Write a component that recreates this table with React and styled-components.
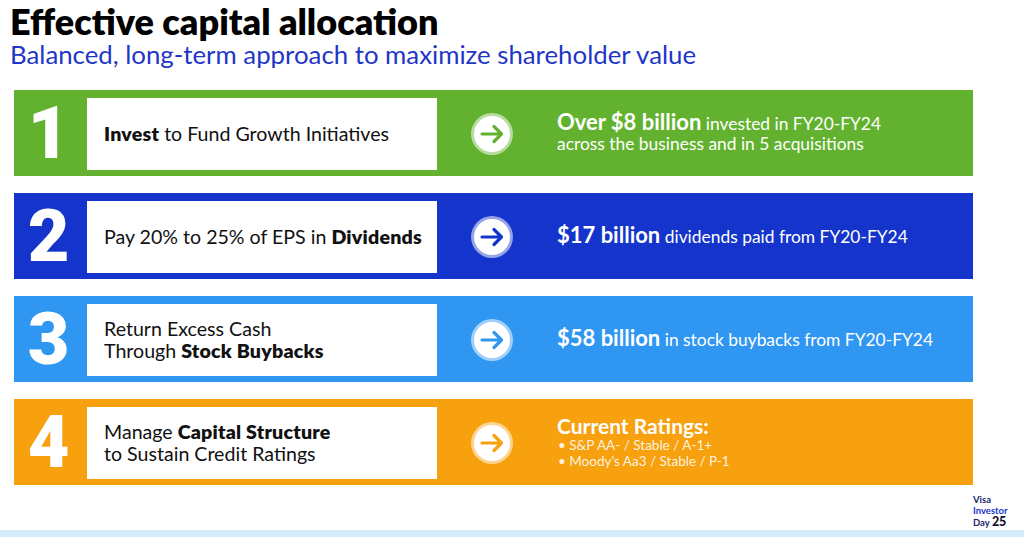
import React from 'react';
import styled, { createGlobalStyle } from 'styled-components';

const GlobalStyle = createGlobalStyle`
  html, body {
    margin: 0;
    padding: 0;
    background: #ffffff;
  }
  body {
    font-family: Lato, "Open Sans", "Liberation Sans", sans-serif;
  }
`;

const Page = styled.div`
  width: 1024px;
  height: 537px;
  display: flex;
  flex-direction: column;
  overflow: hidden;
  background: #ffffff;
`;

const Header = styled.header`
  padding: 0 0 0 10px;
  height: 90px;
`;

const Title = styled.h1`
  margin: 0;
  font-size: 36px;
  font-weight: 800;
  line-height: 42px;
  color: #000000;
`;

const Subtitle = styled.h2`
  margin: 0;
  font-size: 25.8px;
  font-weight: 400;
  line-height: 24px;
  color: #1f36c7;
`;

const Bars = styled.div`
  display: flex;
  flex-direction: column;
  gap: 17px;
  margin-left: 14px;
  width: 959px;
`;

const Bar = styled.div`
  height: 86px;
  box-sizing: border-box;
  padding: 8px 0 8px 0;
  background: ${(p) => p.$color};
  display: grid;
  grid-template-columns: 73px 350px 112px 1fr;
  align-items: stretch;
  color: #ffffff;
`;

const Num = styled.div`
  display: flex;
  align-items: center;
  justify-content: center;
  font-family: Roboto, "Liberation Sans", sans-serif;
  font-size: 72px;
  font-weight: 900;
  color: #ffffff;
  line-height: 1;
  padding-right: 4px;
`;

const Box = styled.div`
  background: #ffffff;
  display: flex;
  flex-direction: column;
  justify-content: center;
  padding-left: 17px;
  color: #111111;
`;

const BoxLine = styled.div`
  font-size: 19.6px;
  line-height: 22px;
  white-space: nowrap;
  b {
    font-weight: 800;
    letter-spacing: 0.2px;
  }
`;

const IconCell = styled.div`
  display: flex;
  align-items: center;
  justify-content: center;
  padding-right: 2px;
`;

const RightText = styled.div`
  display: flex;
  flex-direction: column;
  justify-content: center;
  padding-left: 8px;
  padding-bottom: 2px;
`;

const Line = styled.div`
  font-size: 17.4px;
  line-height: 20px;
  white-space: nowrap;
`;

const Big = styled.span`
  font-size: 22px;
  font-weight: 700;
`;

const RatingsTitle = styled.div`
  font-size: 21px;
  font-weight: 700;
  line-height: 22px;
`;

const Bullet = styled.div`
  font-size: 13.5px;
  line-height: 16px;
  color: rgba(255, 255, 255, 0.88);
  padding-left: 1px;
`;

const Footer = styled.div`
  flex: 1;
  display: flex;
  justify-content: flex-end;
  align-items: flex-end;
  padding: 0 11px 0 0;
`;

const Logo = styled.div`
  display: flex;
  flex-direction: column;
  font-size: 9.5px;
  font-weight: 700;
  width: 40px;
`;

const LogoLine = styled.span`
  display: block;
  white-space: nowrap;
  line-height: ${(p) => (p.$tall ? '14px' : '11px')};
  color: ${(p) => (p.$blue ? '#1434cb' : '#1a1f71')};
`;

const LogoNum = styled.span`
  font-size: 12.5px;
  line-height: 12px;
  font-weight: 900;
  color: #111133;
`;

const Strip = styled.div`
  height: 7px;
  flex-shrink: 0;
  background: #d4ecfa;
`;

const rows = [
  {
    n: '1',
    color: '#62b22f',
    left: [<><b>Invest</b> to Fund Growth Initiatives</>],
    right: (
      <>
        <Line><Big>Over $8 billion</Big> invested in FY20-FY24</Line>
        <Line>across the business and in 5 acquisitions</Line>
      </>
    ),
  },
  {
    n: '2',
    color: '#1434cb',
    left: [<>Pay 20% to 25% of EPS in <b>Dividends</b></>],
    right: <Line><Big>$17 billion</Big> dividends paid from FY20-FY24</Line>,
  },
  {
    n: '3',
    color: '#2f96f2',
    left: [<>Return Excess Cash</>, <>Through <b>Stock Buybacks</b></>],
    right: <Line><Big>$58 billion</Big> in stock buybacks from FY20-FY24</Line>,
  },
  {
    n: '4',
    color: '#f7a10f',
    left: [<>Manage <b>Capital Structure</b></>, <>to Sustain Credit Ratings</>],
    right: (
      <>
        <RatingsTitle>Current Ratings:</RatingsTitle>
        <Bullet>• S&amp;P AA- / Stable / A-1+</Bullet>
        <Bullet>• Moody’s Aa3 / Stable / P-1</Bullet>
      </>
    ),
  },
];

const ArrowIcon = ({ color }) => (
  <svg width="44" height="44" viewBox="0 0 44 44">
    <circle cx="22" cy="22" r="21" fill="rgba(255,255,255,0.55)" />
    <circle cx="22" cy="22" r="18" fill="#ffffff" />
    <path
      d="M12 22 H31 M24 14.5 L31.5 22 L24 29.5"
      fill="none"
      stroke={color}
      strokeWidth="3.2"
      strokeLinecap="round"
      strokeLinejoin="round"
    />
  </svg>
);

export default function App() {
  return (
    <Page>
      <GlobalStyle />
      <Header>
        <Title>Effective capital allocation</Title>
        <Subtitle>Balanced, long-term approach to maximize shareholder value</Subtitle>
      </Header>
      <Bars>
        {rows.map((r) => (
          <Bar key={r.n} $color={r.color}>
            <Num>{r.n}</Num>
            <Box>
              {r.left.map((l, i) => (
                <BoxLine key={i}>{l}</BoxLine>
              ))}
            </Box>
            <IconCell>
              <ArrowIcon color={r.color} />
            </IconCell>
            <RightText>{r.right}</RightText>
          </Bar>
        ))}
      </Bars>
      <Footer>
        <Logo>
          <LogoLine>Visa</LogoLine>
          <LogoLine $blue>Investor</LogoLine>
          <LogoLine $tall>Day <LogoNum>25</LogoNum></LogoLine>
        </Logo>
      </Footer>
      <Strip />
    </Page>
  );
}
